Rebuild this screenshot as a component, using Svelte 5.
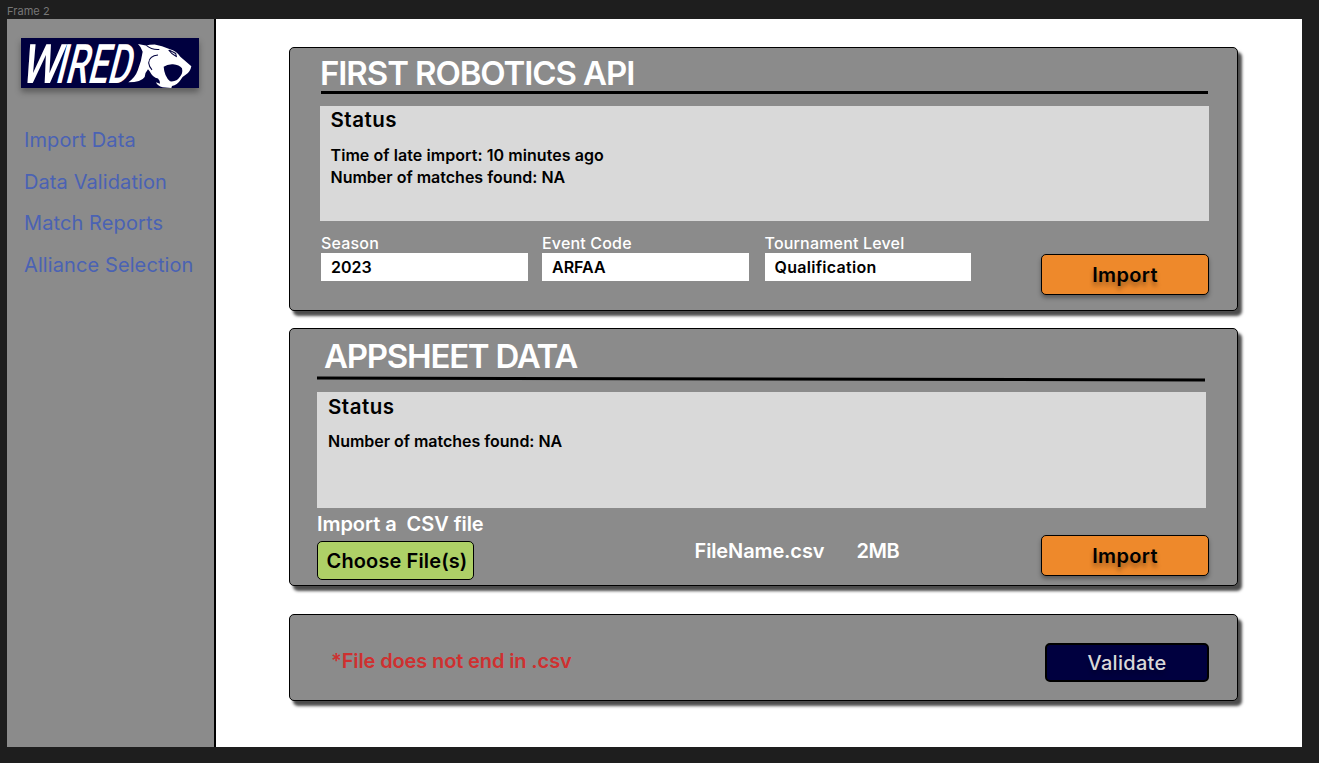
<script>
  const links = ['Import Data', 'Data Validation', 'Match Reports', 'Alliance Selection'];
  const fields = [
    { label: 'Season', value: '2023', cls: 'season' },
    { label: 'Event Code', value: 'ARFAA', cls: 'event' },
    { label: 'Tournament Level', value: 'Qualification', cls: 'level' }
  ];
</script>

<div class="canvas">
  <div class="frame-name">Frame 2</div>
  <div class="frame">
    <aside>
      <svg class="logo" viewBox="63 114 534 149" preserveAspectRatio="none">
        <rect x="63" y="114" width="534" height="149" fill="#00003f" />
        <text transform="translate(0 247) skewX(-14.5)"><tspan x="58" textLength="116" lengthAdjust="spacingAndGlyphs">W</tspan><tspan x="163" textLength="225" lengthAdjust="spacingAndGlyphs">IRED</tspan></text>
        <path fill="#fff" d="M414 132 L437 136 Q448 133 464 133 Q486 136 508 147 Q531 154 541 170 L574 198 Q571 214 558 223 Q548 228 541 240 Q532 254 516 257 L514 263 L488 261 Q472 257 468 246 L480 250 Q480 241 474 235 Q458 232 449 213 L444 207 Q436 215 434 230 Q424 246 385 246 Q406 231 413 211 Q424 185 428 155 Q424 141 414 132 Z" />
        <path fill="#00003f" d="M491 200 Q502 191 519 192 Q538 193 546 204 Q549 218 541 228 Q529 246 510 243 Q493 229 491 200 Z" />
        <path fill="none" stroke="#00003f" stroke-width="3" d="M474 165 Q448 167 446 188 Q447 199 456 209 M439 136 Q455 150 478 148 M506 150 Q514 162 529 169 L527 160 L508 150" />
      </svg>
      <nav>
        {#each links as link, i}
          <a class="n{i}" href="#top">{link}</a>
        {/each}
      </nav>
    </aside>

    <main>
      <section class="card api">
        <h1>FIRST ROBOTICS API</h1>
        <div class="rule"></div>
        <div class="panel">
          <h2>Status</h2>
          <p class="time">Time of late import: 10 minutes ago</p>
          <p class="found">Number of matches found: NA</p>
        </div>
        <div class="controls">
          {#each fields as f}
            <div class="field {f.cls}">
              <span class="label">{f.label}</span>
              <div class="input"><span>{f.value}</span></div>
            </div>
          {/each}
          <button class="import"><span>Import</span></button>
        </div>
      </section>

      <section class="card sheet">
        <h1>APPSHEET DATA</h1>
        <svg class="slant" viewBox="0 0 888 6"><path d="M0 2 L888 4" stroke="#000" stroke-width="3" /></svg>
        <div class="panel">
          <h2>Status</h2>
          <p class="found">Number of matches found: NA</p>
        </div>
        <div class="controls">
          <div class="pick">
            <span class="hint">Import a&nbsp; CSV file</span>
            <button class="choose"><span>Choose File(s)</span></button>
          </div>
          <span class="file">FileName.csv</span>
          <span class="size">2MB</span>
          <button class="import"><span>Import</span></button>
        </div>
      </section>

      <section class="card check">
        <span class="error">*File does not end in .csv</span>
        <button class="validate"><span>Validate</span></button>
      </section>
    </main>
  </div>
</div>

<style>
  :global(body) { background: #1e1e1e; }
  .canvas {
    box-sizing: border-box;
    width: 1319px;
    height: 763px;
    padding: 0 17px 16px 7px;
    background: #1e1e1e;
    font-family: Inter, sans-serif;
    overflow: hidden;
  }
  .frame-name { height: 19px; line-height: 23px; font-size: 11px; color: #777; letter-spacing: 0.05px; }
  .frame { display: flex; height: 728px; background: #fff; }
  aside {
    box-sizing: border-box;
    width: 209px;
    padding: 19px 0 0 14px;
    background: #8b8b8b;
    border-right: 2px solid #000;
  }
  .logo { display: block; width: 178px; height: 50px; overflow: visible; box-shadow: 0 4px 6px rgba(0, 0, 0, 0.35); }
  .logo text { font: 500 162px Roboto, sans-serif; fill: #fff; }
  nav { display: flex; flex-direction: column; margin: 32px 0 0 3px; }
  nav a {
    height: 41.5px;
    line-height: 41.5px;
    font-size: 20px;
    letter-spacing: 0.1px;
    color: #4a62b4;
    text-decoration: none;
    white-space: nowrap;
  }
  main { padding: 28px 0 0 73px; width: 949px; }
  .card {
    box-sizing: border-box;
    width: 949px;
    background: #8b8b8b;
    border: 1px solid #000;
    border-radius: 5px;
    box-shadow: 4px 5px 3px rgba(0, 0, 0, 0.7);
  }
  h1, h2, p { margin: 0; white-space: nowrap; }
  h1 { font-size: 33px; line-height: 40px; font-weight: 600; letter-spacing: -1.1px; color: #fff; }
  h2 { font-size: 20.5px; line-height: 29px; font-weight: 600; letter-spacing: 0.5px; color: #000; }
  p { font-size: 16px; line-height: 22.5px; font-weight: 600; color: #000; }
  .panel { box-sizing: border-box; width: 889px; height: 115.5px; background: #d9d9d9; padding-left: 11px; }
  .controls { display: flex; }
  button {
    box-sizing: border-box;
    padding: 1px 0 0;
    border: 1px solid #000;
    border-radius: 5px;
    font: 600 20px Inter, sans-serif;
    color: #000;
    white-space: nowrap;
  }
  .import {
    width: 168px;
    height: 41px;
    background: #ee892b;
    letter-spacing: 0.35px;
    box-shadow: 0 3px 4px rgba(0, 0, 0, 0.35);
    text-shadow: 0 4px 4px rgba(0, 0, 0, 0.35);
  }

  .api { height: 264px; padding: 5px 0 0 30px; }
  .rule { width: 887px; height: 3px; margin: -2px 0 11.5px 1px; background: #000; }
  .api .panel { margin-bottom: 11px; padding-left: 10.5px; }
  .api h2 { line-height: 28px; }
  .api .time { margin-top: 10px; letter-spacing: 0.07px; }
  .field { width: 207px; margin-left: 1px; margin-right: 14px; }
  .event { width: 206.5px; margin: 0 16px 0 0; }
  .level { width: 206.5px; margin: 0; }
  .label { display: block; height: 21px; line-height: 22px; font-size: 16px; font-weight: 500; letter-spacing: 0.18px; color: #fff; white-space: nowrap; }
  .input {
    height: 28px;
    line-height: 29px;
    padding-left: 10px;
    background: #fff;
    font-size: 16px;
    font-weight: 600;
  }
  .level .input { letter-spacing: 0.3px; }
  .api .import { margin: 22px 0 0 70px; }

  .sheet { height: 258px; margin-top: 17px; padding: 7px 0 0 27px; }
  .sheet h1 { margin-left: 7px; letter-spacing: -1.25px; }
  .slant { display: block; width: 888px; height: 6px; margin: 0 0 10px; }
  .sheet .found { margin-top: 9px; letter-spacing: -0.02px; }
  .pick { width: 157px; }
  .hint { display: block; height: 33px; line-height: 32px; font-size: 20px; font-weight: 600; letter-spacing: -0.06px; color: #fff; white-space: nowrap; }
  .choose { width: 157px; height: 39px; padding-left: 3px; background: #aed067; letter-spacing: 0.12px; }
  .file, .size { height: 28px; line-height: 28px; margin-top: 29px; font-size: 20px; font-weight: 600; letter-spacing: -0.12px; color: #fff; white-space: nowrap; }
  .file { margin-left: 220.5px; width: 162px; }
  .size { width: 184.5px; letter-spacing: -0.4px; }
  .sheet .import { margin-top: 27px; }

  .check { display: flex; justify-content: space-between; align-items: center; height: 87px; margin-top: 28px; padding: 8px 28px 0 41px; }
  .error { margin-top: -1px; font-size: 20px; font-weight: 600; letter-spacing: -0.12px; color: #cf3030; white-space: nowrap; }
  .validate { width: 164px; height: 39px; margin-top: 1px; border-width: 2px; background: #00003f; color: #d9d9d9; font-weight: 500; letter-spacing: 0.3px; text-shadow: 0 4px 4px rgba(0, 0, 0, 0.25); }
</style>
